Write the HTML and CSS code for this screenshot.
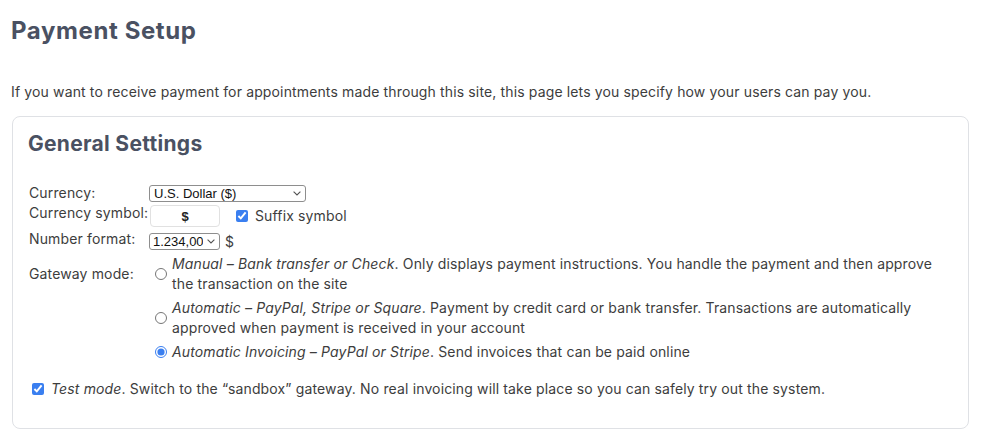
FILE: index.html
```html
<!DOCTYPE html>
<html lang="en">
<head>
<meta charset="utf-8">
<title>Payment Setup</title>
<link rel="stylesheet" href="styles.css">
</head>
<body>
<main class="page">
  <h1 class="page-title">Payment Setup</h1>
  <p class="intro">If you want to receive payment for appointments made through this site, this page lets you specify how your users can pay you.</p>

  <section class="card">
    <h2 class="card-title">General Settings</h2>
    <div class="form-grid">
      <label class="lbl row-currency" for="currency">Currency:</label>
      <div class="field row-currency">
        <select id="currency" class="sel sel-currency">
          <option>U.S. Dollar ($)</option>
        </select>
      </div>

      <label class="lbl row-symbol" for="symbol">Currency symbol:</label>
      <div class="field row-symbol">
        <input id="symbol" class="sym" type="text" value="$">
        <label class="check suffix"><input type="checkbox" checked><span>Suffix symbol</span></label>
      </div>

      <label class="lbl row-number" for="numfmt">Number format:</label>
      <div class="field row-number">
        <select id="numfmt" class="sel sel-num">
          <option>1.234,00</option>
        </select>
        <span class="unit">$</span>
      </div>

      <div class="lbl lbl-gateway">Gateway mode:</div>
      <div class="options">
        <label class="option"><input type="radio" name="gw"><span class="opt-text"><em>Manual – Bank transfer or Check</em>. Only displays payment instructions. You handle the payment and then approve the transaction on the site</span></label>
        <label class="option"><input type="radio" name="gw"><span class="opt-text"><em>Automatic – PayPal, Stripe or Square</em>. Payment by credit card or bank transfer. Transactions are automatically approved when payment is received in your account</span></label>
        <label class="option"><input type="radio" name="gw" checked><span class="opt-text"><em>Automatic Invoicing – PayPal or Stripe</em>. Send invoices that can be paid online</span></label>
      </div>
    </div>

    <label class="check test-mode"><input type="checkbox" checked><span><em>Test mode</em>. Switch to the “sandbox” gateway. No real invoicing will take place so you can safely try out the system.</span></label>
  </section>
</main>
</body>
</html>
```

FILE: styles.css
```css
html, body {
  margin: 0;
  padding: 0;
  background: #ffffff;
}

body {
  font-family: Inter, "Noto Sans", "Liberation Sans", sans-serif;
  font-size: 14px;
  line-height: 20px;
  letter-spacing: 0.14px;
  color: #3d3d3d;
}

.page {
  padding: 16px 15px 0 11px;
}

.page-title {
  margin: 0;
  font-size: 24px;
  line-height: 30px;
  font-weight: 700;
  color: #4a5162;
  letter-spacing: 0.6px;
}

.intro {
  margin: 36px 0 0 0;
  line-height: 20px;
}

.card {
  margin: 14px 0 0 1px;
  border: 1px solid #dfe1e5;
  border-radius: 8px;
  padding: 14px 15px 29px 15px;
}

.card-title {
  margin: 0;
  font-size: 21px;
  line-height: 26px;
  font-weight: 700;
  color: #4a5162;
  letter-spacing: 0.3px;
}

.form-grid {
  display: grid;
  grid-template-columns: 120px 1fr;
  align-items: center;
  margin-top: 26px;
  padding-left: 1px;
}

.lbl {
  white-space: nowrap;
}

.field {
  display: flex;
  align-items: center;
}

.row-currency { height: 20px; }
.row-symbol { height: 26px; }
.row-number { height: 25px; }

.lbl-gateway {
  align-self: start;
  line-height: 40px;
}

.sel {
  appearance: none;
  -webkit-appearance: none;
  font-family: "Liberation Sans", Arial, sans-serif;
  font-size: 13px;
  letter-spacing: 0;
  color: #111;
  height: 17px;
  line-height: 15px;
  padding: 0 16px 0 4px;
  border: 1px solid #8e8e8e;
  border-radius: 3px;
  background-color: #fff;
  background-image: url("data:image/svg+xml,%3Csvg xmlns='http://www.w3.org/2000/svg' width='8' height='5' viewBox='0 0 8 5'%3E%3Cpath d='M0.6 0.6 L4 4 L7.4 0.6' fill='none' stroke='%23555' stroke-width='1.1'/%3E%3C/svg%3E");
  background-repeat: no-repeat;
  background-position: right 4px center;
  margin: 0;
}

.sel-currency { width: 157px; }
.sel-num { width: 71px; padding-left: 3px; }

.unit {
  margin-left: 5px;
}

.sym {
  width: 70px;
  height: 22px;
  box-sizing: border-box;
  margin: 0 0 0 1px;
  border: 1px solid #e1e1e1;
  border-radius: 4px;
  text-align: center;
  font-family: "Liberation Sans", Arial, sans-serif;
  font-size: 13px;
  font-weight: 700;
  letter-spacing: 0;
  color: #222;
  padding: 0;
  outline: none;
}

.check {
  display: flex;
  align-items: center;
}

.check input {
  margin: 0;
  width: 12px;
  height: 12px;
  accent-color: #3a7ff0;
  flex: none;
}

.suffix {
  margin-left: 16px;
}

.suffix span {
  margin-left: 7px;
}

.options {
  display: flex;
  flex-direction: column;
  gap: 4px;
}

.option {
  display: flex;
  align-items: center;
}

.option input {
  margin: 0 5px 0 6px;
  width: 12px;
  height: 12px;
  accent-color: #3a7ff0;
  flex: none;
}

.opt-text em,
.test-mode em {
  font-style: italic;
}

.test-mode {
  margin-top: 17px;
  margin-left: 4px;
}

.test-mode span {
  margin-left: 7px;
}
```
